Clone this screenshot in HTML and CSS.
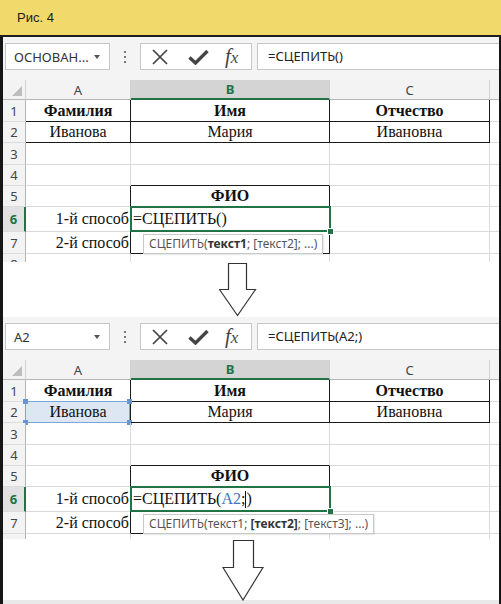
FILE: index.html
```html
<!DOCTYPE html>
<html lang="ru">
<head>
<meta charset="UTF-8"/>
<title>Рис. 4</title>
<link rel="stylesheet" href="styles.css">
</head>
<body>
<div class="cap">Рис. 4</div>
<div class="frame">

 <div class="shot s1">
  <div class="fbar">
   <div class="namebox"><span>ОСНОВАН...</span><i class="tri"></i></div>
   <div class="dots"><b></b><b></b><b></b></div>
   <div class="icons">
    <svg class="ic-x" width="16" height="16" viewBox="0 0 16 16"><path d="M1 1L15 15M15 1L1 15" stroke="#444" stroke-width="1.7" fill="none"/></svg>
    <svg class="ic-ok" width="21" height="16" viewBox="0 0 21 16"><path d="M1.5 8.5L7.5 14L19.5 2" stroke="#444" stroke-width="3.4" fill="none"/></svg>
    <span class="fx">f<small>x</small></span>
   </div>
   <div class="formula">=СЦЕПИТЬ()</div>
  </div>
  <div class="sheet">
   <div class="ch corner"></div><div class="ch">A</div><div class="ch on">B</div><div class="ch">C</div><div class="ch rest"></div>

   <div class="rh">1</div><div class="bd ctr tr tb">Фамилия</div><div class="bd ctr tr tb">Имя</div><div class="bd ctr tr tb">Отчество</div><div class="rest"></div>
   <div class="rh">2</div><div class="ctr tr tb">Иванова</div><div class="ctr tr tb">Мария</div><div class="ctr tr tb">Ивановна</div><div class="rest"></div>
   <div class="rh">3</div><div></div><div></div><div></div><div class="rest"></div>
   <div class="rh">4</div><div></div><div class="tb"></div><div></div><div class="rest"></div>
   <div class="rh">5</div><div class="tr"></div><div class="bd ctr tr">ФИО</div><div></div><div class="rest"></div>
   <div class="rh on">6</div><div class="rt tr">1-й способ</div><div class="tr">=СЦЕПИТЬ()<span class="sel"><i></i></span></div><div></div><div class="rest"></div>
   <div class="rh">7</div><div class="rt tr">2-й способ</div><div class="tr tb"><span class="tip">СЦЕПИТЬ(<b>текст1</b>; [текст2]; ...)</span></div><div></div><div class="rest"></div>
   <div class="rh">8</div><div></div><div></div><div></div><div class="rest"></div>
  </div>
 </div>

 <div class="gap g1">
  <svg width="38" height="54" viewBox="0 0 38 54"><path d="M9.5 0.5H27.5V26.5H36.5L18.5 52.5L0.5 26.5H9.5Z" fill="#fff" stroke="#333" stroke-width="1.2"/></svg>
 </div>

 <div class="shot s2">
  <div class="fbar">
   <div class="namebox"><span>A2</span><i class="tri"></i></div>
   <div class="dots"><b></b><b></b><b></b></div>
   <div class="icons">
    <svg class="ic-x" width="16" height="16" viewBox="0 0 16 16"><path d="M1 1L15 15M15 1L1 15" stroke="#444" stroke-width="1.7" fill="none"/></svg>
    <svg class="ic-ok" width="21" height="16" viewBox="0 0 21 16"><path d="M1.5 8.5L7.5 14L19.5 2" stroke="#444" stroke-width="3.4" fill="none"/></svg>
    <span class="fx">f<small>x</small></span>
   </div>
   <div class="formula">=СЦЕПИТЬ(A2;)</div>
  </div>
  <div class="sheet">
   <div class="ch corner"></div><div class="ch">A</div><div class="ch on">B</div><div class="ch">C</div><div class="ch rest"></div>

   <div class="rh">1</div><div class="bd ctr tr tb">Фамилия</div><div class="bd ctr tr tb">Имя</div><div class="bd ctr tr tb">Отчество</div><div class="rest"></div>
   <div class="rh">2</div><div class="ctr tr tb hl">Иванова<span class="ref"><i class="h1"></i><i class="h2"></i><i class="h3"></i><i class="h4"></i></span></div><div class="ctr tr tb">Мария</div><div class="ctr tr tb">Ивановна</div><div class="rest"></div>
   <div class="rh">3</div><div></div><div></div><div></div><div class="rest"></div>
   <div class="rh">4</div><div></div><div class="tb"></div><div></div><div class="rest"></div>
   <div class="rh">5</div><div class="tr"></div><div class="bd ctr tr">ФИО</div><div></div><div class="rest"></div>
   <div class="rh on">6</div><div class="rt tr">1-й способ</div><div class="tr">=СЦЕПИТЬ(<span class="blue">A2</span>;<span class="caret"></span>)<span class="sel"><i></i></span></div><div></div><div class="rest"></div>
   <div class="rh">7</div><div class="rt tr">2-й способ</div><div class="tr tb"><span class="tip">СЦЕПИТЬ(текст1; <b>[текст2]</b>; [текст3]; ...)</span></div><div></div><div class="rest"></div>
   <div class="rh">8</div><div></div><div></div><div></div><div class="rest"></div>
  </div>
 </div>

 <div class="gap g2">
  <svg width="42" height="61" viewBox="0 0 42 61"><path d="M11.5 0.5H31.5V27.5H41L21 60L1 27.5H11.5Z" fill="#fff" stroke="#333" stroke-width="1.2"/></svg>
 </div>

 <div class="foot"></div>
</div>
</body>
</html>
```

FILE: styles.css
```css
body{
 margin: 0;
 width: 501px;
 height: 604px;
 overflow: hidden;
 background: #fff;
 font-family: "Noto Sans", "Liberation Sans", sans-serif;
}
.cap{
 height: 35px;
 padding-left: 17px;
 background: #f1d96c;
 border-bottom: 2px solid #1e1e1e;
 font: 13px/36px "Liberation Sans", Arial, sans-serif;
 color: #1c1c1c;
}
.frame{
 border-left: 3px solid #161616;
 border-right: 2px solid #161616;
}
.shot{
 overflow: hidden;
 background: #f4f4f4;
}
.s1{ height: 225px; }
.s2{ height: 222px; }

/* строка формул */
.fbar{
 display: flex;
 align-items: center;
 height: 27px;
 padding-top: 6px;
 margin-bottom: 10px;
}
.namebox{
 box-sizing: border-box;
 margin-left: 2px;
 width: 105px;
 height: 27px;
 display: flex;
 align-items: center;
 justify-content: space-between;
 padding: 0 9px 0 8px;
 background: #fff;
 border: 1px solid #c6c6c6;
 font-size: 13px;
 color: #333;
}
.tri{
 width: 0;
 height: 0;
 border-left: 3.5px solid transparent;
 border-right: 3.5px solid transparent;
 border-top: 4px solid #555;
}
.dots{
 width: 30px;
 display: flex;
 flex-direction: column;
 align-items: center;
 gap: 3px;
}
.dots b{
 width: 2px;
 height: 2px;
 background: #777;
}
.icons{
 box-sizing: border-box;
 width: 112px;
 height: 27px;
 display: flex;
 align-items: center;
 padding-left: 11px;
 background: #fff;
 border: 1px solid #c6c6c6;
}
.ic-ok{ margin-left: 20px; }
.fx{
 margin-left: 16px;
 font: italic 21px/1 "Liberation Serif", serif;
 color: #444;
}
.fx small{
 font-size: 17px;
}
.formula{
 flex: 1;
 box-sizing: border-box;
 height: 27px;
 margin-left: 5px;
 padding-left: 10px;
 background: #fff;
 border: 1px solid #c6c6c6;
 border-right: none;
 font-size: 13px;
 line-height: 25px;
 color: #222;
}

/* лист */
.sheet{
 display: grid;
 grid-template-columns: 23px 105px 199px 160px 1fr;
 grid-template-rows: 20px 22px 21px 22px 21px 21px 25px 22px 20px;
 background: #fff;
}
.sheet > div{
 box-sizing: border-box;
 position: relative;
 display: flex;
 align-items: center;
 white-space: nowrap;
 border-right: 1px solid #dadada;
 border-bottom: 1px solid #dadada;
 font: 16px "Liberation Serif", "Times New Roman", serif;
 color: #111;
 padding-left: 2px;
}
.sheet > .rest{ border-right: none; }
.sheet > .ch, .sheet > .rh{
 justify-content: center;
 padding-left: 0;
 background: #f3f3f3;
 font: 13px "Noto Sans", sans-serif;
 color: #444;
}
.sheet > .ch{
 border-right-color: #d0d0d0;
 border-bottom-color: #b5b5b5;
}
.sheet > .rh{
 border-right-color: #b5b5b5;
 border-bottom-color: #dcdcdc;
}
.sheet > .ch.on{
 background: #d4d4d4;
 color: #217346;
 font-weight: bold;
 border-bottom: 2px solid #217346;
}
.sheet > .rh.on{
 background: #e1e1e1;
 color: #217346;
 font-weight: bold;
 border-right: 2px solid #217346;
}
.corner::after{
 content: "";
 position: absolute;
 right: 3px;
 bottom: 3px;
 border-left: 10px solid transparent;
 border-bottom: 10px solid #bdbdbd;
}
.sheet > .ctr{ justify-content: center; padding-left: 0; }
.sheet > .rt{ justify-content: flex-end; padding: 0 1px 0 0; }
.sheet > .bd{ font-weight: bold; }
.sheet > .tb{ border-bottom-color: #1a1a1a; }
.sheet > .tr{ border-right-color: #1a1a1a; }
.sheet > .hl{ background: #dde7f4; }

/* выделенная ячейка */
.sel{
 position: absolute;
 top: -1px;
 left: -1px;
 right: -2px;
 bottom: -1px;
 border: 2px solid #217346;
 z-index: 2;
}
.sel i{
 position: absolute;
 right: -5px;
 bottom: -5px;
 width: 5px;
 height: 5px;
 background: #217346;
 border: 1px solid #fff;
}
.blue{ color: #4472c4; }
.caret{
 display: inline-block;
 width: 1px;
 height: 17px;
 background: #111;
 vertical-align: middle;
}
.ref{
 position: absolute;
 top: -1px;
 left: -1px;
 right: 0;
 bottom: -1px;
 border: 1px solid #7ea4d8;
}
.ref i{
 position: absolute;
 width: 5px;
 height: 5px;
 background: #6a93d3;
}
.ref .h1{ left: -3px; top: -3px; }
.ref .h2{ right: -3px; top: -3px; }
.ref .h3{ left: -3px; bottom: -3px; }
.ref .h4{ right: -3px; bottom: -3px; }

/* подсказка */
.tip{
 position: absolute;
 top: 2px;
 left: 12px;
 height: 18px;
 padding: 0 5px;
 z-index: 3;
 background: #fff;
 border: 1px solid #c8c8c8;
 box-shadow: 1px 1px 1px rgba(0,0,0,0.08);
 font: 12px/18px "Noto Sans", sans-serif;
 color: #555;
}
.tip b{ color: #333; }

/* стрелки */
.gap{ background: #fff; }
.g1{ height: 55px; }
.g1 svg{ display: block; margin-left: 216px; padding-top: 1px; }
.g2{ height: 61px; }
.g2 svg{ display: block; margin-left: 219px; padding-top: 1px; }
.foot{
 height: 10px;
 background: #e9e9e9;
}
```
